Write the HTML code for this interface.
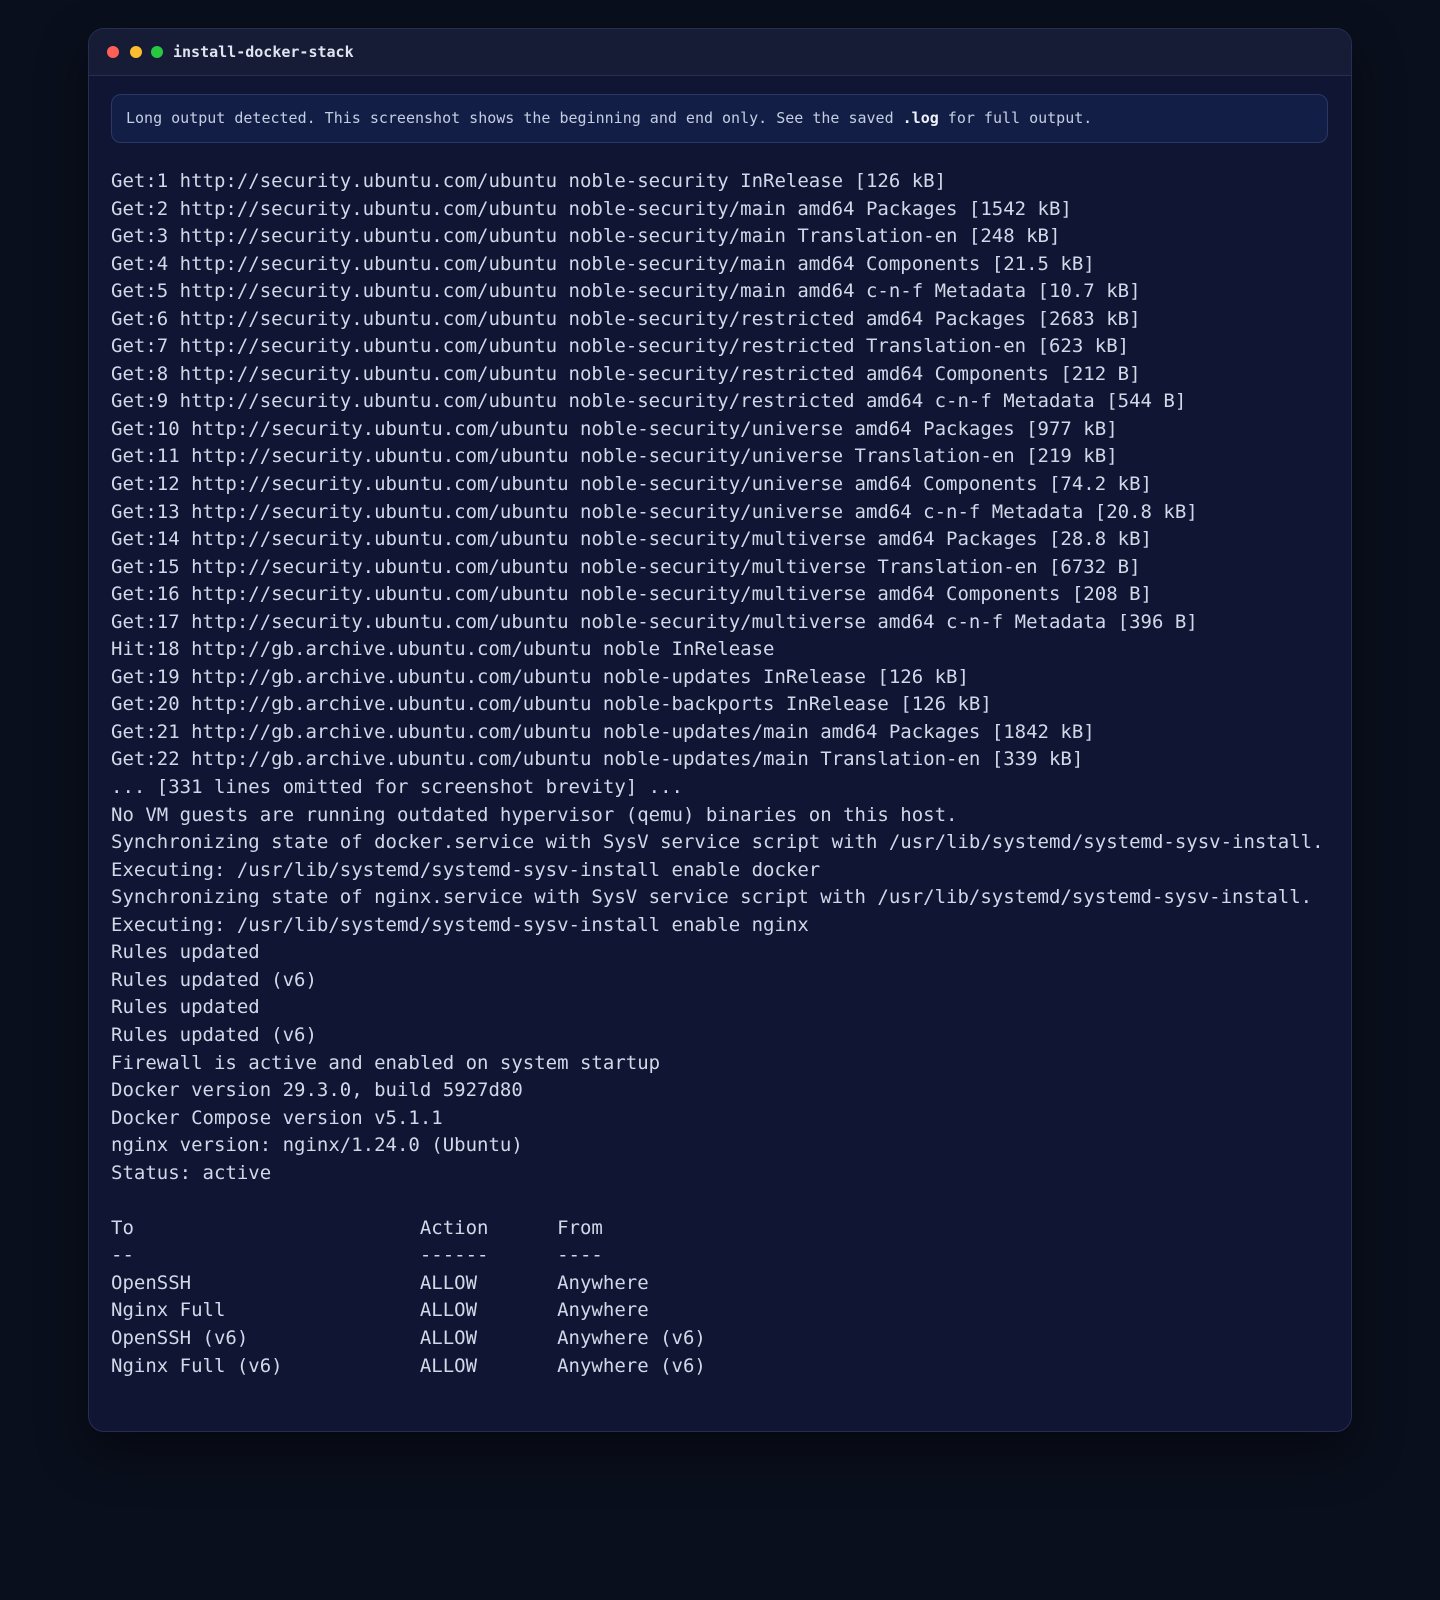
<!DOCTYPE html>
<html><head><meta charset="utf-8"><style>
html,body{margin:0;padding:0;width:1440px;height:1600px;background:#0a0f1d;overflow:hidden}
.win{position:absolute;left:88px;top:28px;width:1262px;height:1402px;border:1px solid #262f52;border-radius:16px;background:#0f1532;box-shadow:0 20px 50px rgba(0,0,0,.45);overflow:hidden}
.tb{height:46px;border-bottom:1px solid #262f52;background:#161c36;position:relative}
.dot{position:absolute;top:17px;width:12px;height:12px;border-radius:50%}
.title{position:absolute;left:84px;top:13px;font:bold 15px/20px "DejaVu Sans Mono","Liberation Mono",monospace;color:#dfe4f0}
.banner{position:absolute;left:22px;top:65px;width:1217px;height:49px;border:1px solid #2b3866;border-radius:10px;background:#131e47;box-sizing:border-box;padding-left:14px;font:15px/47px "DejaVu Sans Mono","Liberation Mono",monospace;color:#c5cde2;white-space:pre}
.banner b{color:#eef1f8}
pre{position:absolute;left:22px;top:139px;margin:0;font:19px/27.55px "DejaVu Sans Mono","Liberation Mono",monospace;color:#d2d8e8;white-space:pre}
</style></head><body>
<div class="win">
<div class="tb">
<div class="dot" style="left:18px;background:#ff5f57"></div>
<div class="dot" style="left:41px;background:#febc2e"></div>
<div class="dot" style="left:62px;background:#28c840"></div>
<div class="title">install-docker-stack</div>
</div>
<div class="banner">Long output detected. This screenshot shows the beginning and end only. See the saved <b>.log</b> for full output.</div>
<pre>Get:1 http://security.ubuntu.com/ubuntu noble-security InRelease [126 kB]
Get:2 http://security.ubuntu.com/ubuntu noble-security/main amd64 Packages [1542 kB]
Get:3 http://security.ubuntu.com/ubuntu noble-security/main Translation-en [248 kB]
Get:4 http://security.ubuntu.com/ubuntu noble-security/main amd64 Components [21.5 kB]
Get:5 http://security.ubuntu.com/ubuntu noble-security/main amd64 c-n-f Metadata [10.7 kB]
Get:6 http://security.ubuntu.com/ubuntu noble-security/restricted amd64 Packages [2683 kB]
Get:7 http://security.ubuntu.com/ubuntu noble-security/restricted Translation-en [623 kB]
Get:8 http://security.ubuntu.com/ubuntu noble-security/restricted amd64 Components [212 B]
Get:9 http://security.ubuntu.com/ubuntu noble-security/restricted amd64 c-n-f Metadata [544 B]
Get:10 http://security.ubuntu.com/ubuntu noble-security/universe amd64 Packages [977 kB]
Get:11 http://security.ubuntu.com/ubuntu noble-security/universe Translation-en [219 kB]
Get:12 http://security.ubuntu.com/ubuntu noble-security/universe amd64 Components [74.2 kB]
Get:13 http://security.ubuntu.com/ubuntu noble-security/universe amd64 c-n-f Metadata [20.8 kB]
Get:14 http://security.ubuntu.com/ubuntu noble-security/multiverse amd64 Packages [28.8 kB]
Get:15 http://security.ubuntu.com/ubuntu noble-security/multiverse Translation-en [6732 B]
Get:16 http://security.ubuntu.com/ubuntu noble-security/multiverse amd64 Components [208 B]
Get:17 http://security.ubuntu.com/ubuntu noble-security/multiverse amd64 c-n-f Metadata [396 B]
Hit:18 http://gb.archive.ubuntu.com/ubuntu noble InRelease
Get:19 http://gb.archive.ubuntu.com/ubuntu noble-updates InRelease [126 kB]
Get:20 http://gb.archive.ubuntu.com/ubuntu noble-backports InRelease [126 kB]
Get:21 http://gb.archive.ubuntu.com/ubuntu noble-updates/main amd64 Packages [1842 kB]
Get:22 http://gb.archive.ubuntu.com/ubuntu noble-updates/main Translation-en [339 kB]
... [331 lines omitted for screenshot brevity] ...
No VM guests are running outdated hypervisor (qemu) binaries on this host.
Synchronizing state of docker.service with SysV service script with /usr/lib/systemd/systemd-sysv-install.
Executing: /usr/lib/systemd/systemd-sysv-install enable docker
Synchronizing state of nginx.service with SysV service script with /usr/lib/systemd/systemd-sysv-install.
Executing: /usr/lib/systemd/systemd-sysv-install enable nginx
Rules updated
Rules updated (v6)
Rules updated
Rules updated (v6)
Firewall is active and enabled on system startup
Docker version 29.3.0, build 5927d80
Docker Compose version v5.1.1
nginx version: nginx/1.24.0 (Ubuntu)
Status: active

To                         Action      From
--                         ------      ----
OpenSSH                    ALLOW       Anywhere
Nginx Full                 ALLOW       Anywhere
OpenSSH (v6)               ALLOW       Anywhere (v6)
Nginx Full (v6)            ALLOW       Anywhere (v6)</pre>
</div>
</body></html>
